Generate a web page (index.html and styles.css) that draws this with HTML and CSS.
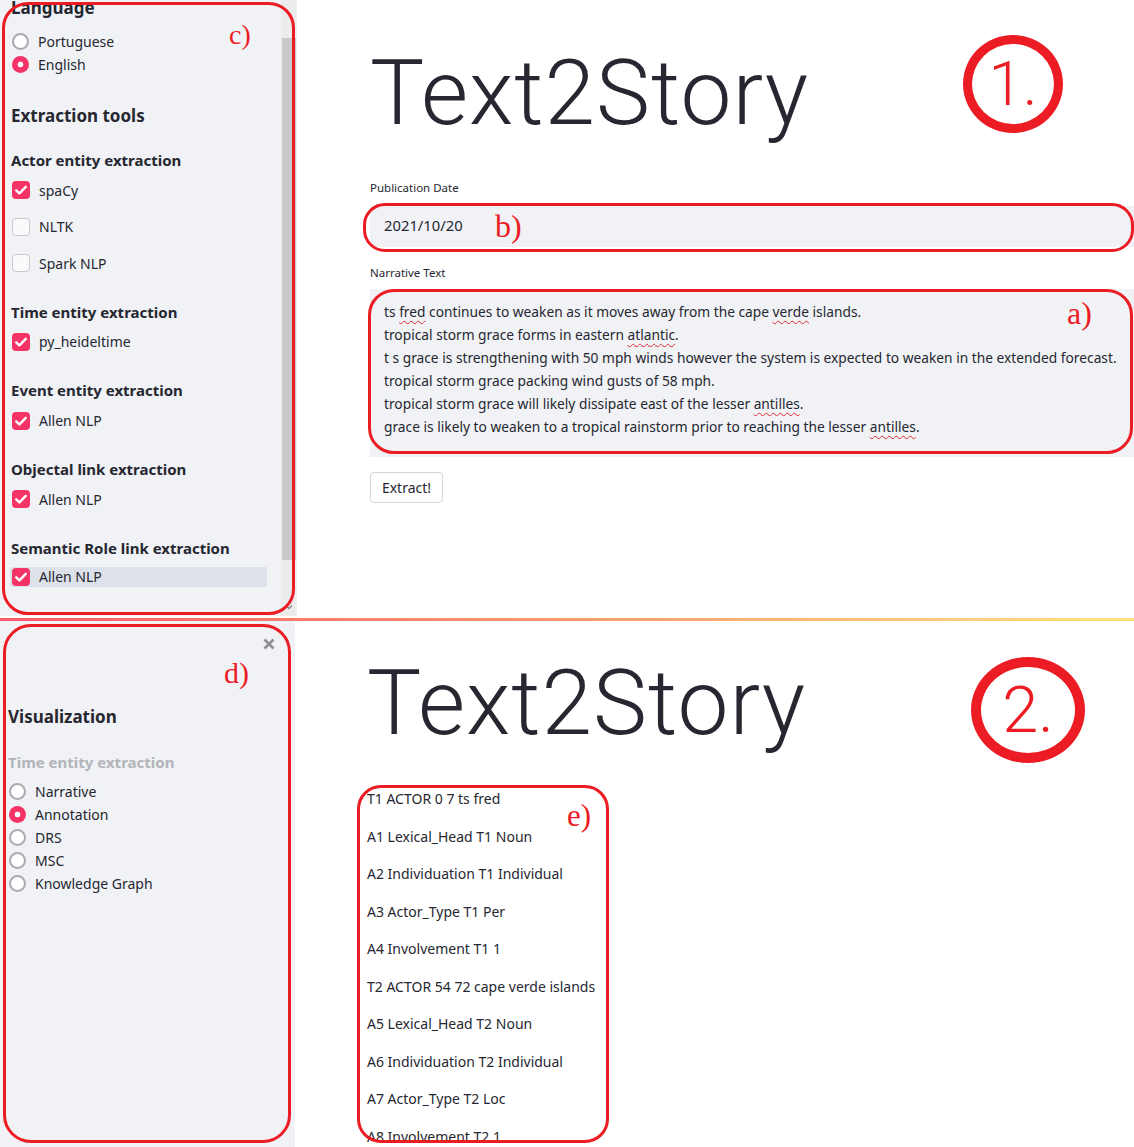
FILE: index.html
```html
<!DOCTYPE html>
<html lang="en">
<head>
<meta charset="utf-8">
<title>Text2Story</title>
<link rel="stylesheet" href="styles.css">
</head>
<body>
<section class="panel panel-top">
  <aside class="sidebar sb-top">
    <div class="sb-content">
      <h3 class="sb-h3 lang">Language</h3>
      <div class="radio-group first">
        <label class="radio"><span class="rdot"></span>Portuguese</label>
        <label class="radio on"><span class="rdot"></span>English</label>
      </div>
      <h3 class="sb-h3 tools">Extraction tools</h3>
      <div class="group g1">
        <h4 class="sb-h4">Actor entity extraction</h4>
        <label class="check on"><span class="cbox"><svg viewBox="0 0 18 18"><path d="M4.2 9.3l3.2 3.1 6.4-6.6"/></svg></span>spaCy</label>
        <label class="check"><span class="cbox"></span>NLTK</label>
        <label class="check"><span class="cbox"></span>Spark NLP</label>
      </div>
      <div class="group">
        <h4 class="sb-h4">Time entity extraction</h4>
        <label class="check on"><span class="cbox"><svg viewBox="0 0 18 18"><path d="M4.2 9.3l3.2 3.1 6.4-6.6"/></svg></span>py_heideltime</label>
      </div>
      <div class="group">
        <h4 class="sb-h4">Event entity extraction</h4>
        <label class="check on"><span class="cbox"><svg viewBox="0 0 18 18"><path d="M4.2 9.3l3.2 3.1 6.4-6.6"/></svg></span>Allen NLP</label>
      </div>
      <div class="group">
        <h4 class="sb-h4">Objectal link extraction</h4>
        <label class="check on"><span class="cbox"><svg viewBox="0 0 18 18"><path d="M4.2 9.3l3.2 3.1 6.4-6.6"/></svg></span>Allen NLP</label>
      </div>
      <div class="group">
        <h4 class="sb-h4">Semantic Role link extraction</h4>
        <label class="check on hover"><span class="cbox"><svg viewBox="0 0 18 18"><path d="M4.2 9.3l3.2 3.1 6.4-6.6"/></svg></span>Allen NLP</label>
      </div>
    </div>
    <div class="scrollbar">
      <div class="thumb"></div>
      <svg class="chev" viewBox="0 0 8 6"><path d="M1 1.5l3 3 3-3"/></svg>
    </div>
  </aside>
  <main class="main main-top">
    <h1 class="title">Text2Story</h1>
    <div class="field-label lbl-date">Publication Date</div>
    <div class="date-input">2021/10/20</div>
    <div class="field-label lbl-text">Narrative Text</div>
    <div class="textarea">
      <p>ts <span class="sp">fred</span> continues to weaken as it moves away from the cape <span class="sp">verde</span> islands.</p>
      <p>tropical storm grace forms in eastern <span class="sp">atlantic</span>.</p>
      <p>t s grace is strengthening with 50 mph winds however the system is expected to weaken in the extended forecast.</p>
      <p>tropical storm grace packing wind gusts of 58 mph.</p>
      <p>tropical storm grace will likely dissipate east of the lesser <span class="sp">antilles</span>.</p>
      <p>grace is likely to weaken to a tropical rainstorm prior to reaching the lesser <span class="sp">antilles</span>.</p>
    </div>
    <button class="btn">Extract!</button>
  </main>

  <div class="ann box box-c"></div>
  <div class="ann tag tag-c">c)</div>
  <div class="ann ring ring-1"><span>1.</span></div>
  <div class="ann box box-b"></div>
  <div class="ann tag tag-b">b)</div>
  <div class="ann box box-a"></div>
  <div class="ann tag tag-a">a)</div>
</section>

<div class="spacer"></div>
<div class="decoration"></div>

<section class="panel panel-bottom">
  <aside class="sidebar sb-bottom">
    <div class="sb-head">
      <svg class="close" viewBox="0 0 12 12"><path d="M1.5 1.5l9 9M10.5 1.5l-9 9"/></svg>
    </div>
    <h3 class="sb-h3 vis">Visualization</h3>
    <h4 class="sb-h4 disabled">Time entity extraction</h4>
    <div class="radio-group vis-radios">
      <label class="radio"><span class="rdot"></span>Narrative</label>
      <label class="radio on"><span class="rdot"></span>Annotation</label>
      <label class="radio"><span class="rdot"></span>DRS</label>
      <label class="radio"><span class="rdot"></span>MSC</label>
      <label class="radio"><span class="rdot"></span>Knowledge Graph</label>
    </div>
  </aside>
  <main class="main main-bottom">
    <h1 class="title">Text2Story</h1>
    <ul class="ann-list">
      <li>T1 ACTOR 0 7 ts fred</li>
      <li>A1 Lexical_Head T1 Noun</li>
      <li>A2 Individuation T1 Individual</li>
      <li>A3 Actor_Type T1 Per</li>
      <li>A4 Involvement T1 1</li>
      <li>T2 ACTOR 54 72 cape verde islands</li>
      <li>A5 Lexical_Head T2 Noun</li>
      <li>A6 Individuation T2 Individual</li>
      <li>A7 Actor_Type T2 Loc</li>
      <li>A8 Involvement T2 1</li>
    </ul>
  </main>

  <div class="ann box box-d"></div>
  <div class="ann tag tag-d">d)</div>
  <div class="ann ring ring-2"><span>2.</span></div>
  <div class="ann box box-e"></div>
  <div class="ann tag tag-e">e)</div>
</section>
</body>
</html>
```

FILE: styles.css
```css
* { box-sizing: border-box; margin: 0; padding: 0; }
html, body { width: 1134px; height: 1147px; overflow: hidden; background: #fff; }
body { font-family: "Noto Sans", "DejaVu Sans", sans-serif; color: #262730; font-size: 14px; }

.panel { position: relative; display: grid; overflow: hidden; }
.panel-top { height: 616px; grid-template-columns: 297px 1fr; }
.panel-bottom { height: 526px; grid-template-columns: 295px 1fr; }
.spacer { height: 2px; }
.decoration { height: 3px; background: linear-gradient(90deg, #f95a6c 0%, #fb9a6c 50%, #ffe27e 100%); }

/* ---------- sidebar ---------- */
.sidebar { background: #f0f2f6; overflow: hidden; }
.sb-top { display: grid; grid-template-columns: 281px 16px; }
.sb-content { padding-left: 11px; overflow: hidden; }
.scrollbar { background: #ececec; display: flex; flex-direction: column; align-items: center; }
.thumb { margin-top: 38px; width: 14px; height: 522px; background: #c9c9c9; }
.chev { margin-top: 44px; width: 8px; height: 6px; fill: none; stroke: #8a8a8a; stroke-width: 1.4; }

.sb-h3 { font-size: 17px; font-weight: 700; line-height: 24px; }
.sb-h4 { font-size: 15px; font-weight: 700; line-height: 20px; }
.lang { margin-top: -4px; }
.radio-group.first { margin-top: 10px; }
.tools { margin-top: 28px; }
.group { margin-top: 20.2px; }
.group.g1 { margin-top: 22px; }
.group .sb-h4 { margin-bottom: 2px; }

.radio { display: flex; align-items: center; height: 23px; gap: 9px; font-size: 14px; }
.rdot { width: 17px; height: 17px; border-radius: 50%; border: 2px solid #a9abb0; background: #fff; flex: none; margin-left: 1px; }
.radio.on .rdot { border: none; background: radial-gradient(circle, #fff 0 2.6px, #f63366 3.2px); }

.check { display: flex; align-items: center; height: 36.5px; gap: 9px; font-size: 14px; }
.cbox { width: 18px; height: 18px; border-radius: 4px; border: 1.5px solid #c7c9cf; background: #fafafa; flex: none; margin-left: 1px; display: flex; }
.check.on .cbox { background: #f63366; border: none; }
.cbox svg { width: 18px; height: 18px; fill: none; stroke: #fff; stroke-width: 2.4; stroke-linecap: round; stroke-linejoin: round; }
.check.hover { background: #dde1e9; height: 20px; margin-top: 9px; width: 257px; margin-left: -1px; padding-left: 1px; border-radius: 2px; }

.sb-bottom { padding-left: 8px; }
.sb-head { height: 84px; display: flex; justify-content: flex-end; padding: 17px 20px 0 0; }
.close { width: 12px; height: 12px; fill: none; stroke: #8e8f94; stroke-width: 2.6; }
.sb-h4.disabled { color: #b3b4b9; margin-top: 22.6px; }
.vis-radios { margin-top: 8.5px; }
.vis-radios .rdot { margin-left: 1px; }

/* ---------- main ---------- */
.main { overflow: hidden; }
.main-top { padding-left: 73px; }
.main-bottom { padding-left: 72px; }
.title { font-family: Roboto, "Noto Sans", sans-serif; font-weight: 300; font-size: 91px; line-height: 91px; letter-spacing: 1px; white-space: nowrap; }
.main-top .title { margin-top: 48px; }
.main-bottom .title { margin-top: 37px; }

.field-label { font-size: 11.5px; line-height: 16px; }
.lbl-date { margin-top: 41px; }
.date-input { margin-top: 10px; height: 41px; background: #f0f2f6; padding: 0 0 3px 14px; display: flex; align-items: center; font-size: 14.8px; border-radius: 2px 0 0 2px; }
.lbl-text { margin-top: 18px; }
.textarea { margin-top: 8px; height: 168px; background: #f0f2f6; padding: 10.5px 0 0 14px; font-size: 13.76px; line-height: 23px; white-space: nowrap; }
.sp { text-decoration: underline wavy #e0262d; text-decoration-thickness: 1px; text-underline-offset: 3px; }
.btn { margin-top: 15px; width: 73px; height: 31px; background: #fff; border: 1px solid #d6d6d9; border-radius: 4px; font-family: inherit; font-size: 14px; color: #262730; }

.ann-list { list-style: none; margin-top: 31px; font-size: 14px; }
.ann-list li { line-height: 37.5px; height: 37.5px; white-space: nowrap; }

/* ---------- annotations ---------- */
.ann { position: absolute; }
.box { border: 3px solid #ec1c24; }
.tag { font-family: "Liberation Serif", serif; color: #ec1c24; line-height: 1; }
.ring { border-style: solid; border-color: #ec1c24; border-radius: 50%; display: flex; align-items: center; justify-content: center; color: #ec1c24; font-family: Roboto, sans-serif; font-weight: 300; line-height: 1; }

.box-c { left: 2px; top: 2px; width: 293px; height: 613px; border-radius: 26px; }
.tag-c { left: 229px; top: 21px; font-size: 28px; }
.ring-1 { left: 963px; top: 35px; width: 100px; height: 98px; border-width: 9px; font-size: 62px; }
.box-b { left: 363px; top: 203px; width: 771px; height: 49px; border-radius: 22px; }
.tag-b { left: 495px; top: 210px; font-size: 32px; }
.box-a { left: 368px; top: 289px; width: 765px; height: 165px; border-radius: 26px; }
.tag-a { left: 1067px; top: 297px; font-size: 32px; }

.box-d { left: 3px; top: 3px; width: 288px; height: 519px; border-radius: 28px; }
.tag-d { left: 224px; top: 37px; font-size: 30px; }
.ring-2 { left: 971px; top: 36px; width: 114px; height: 106px; border-width: 10px; font-size: 65px; }
.box-e { left: 357px; top: 164px; width: 252px; height: 358px; border-radius: 24px; }
.tag-e { left: 567px; top: 179px; font-size: 31px; }
```
